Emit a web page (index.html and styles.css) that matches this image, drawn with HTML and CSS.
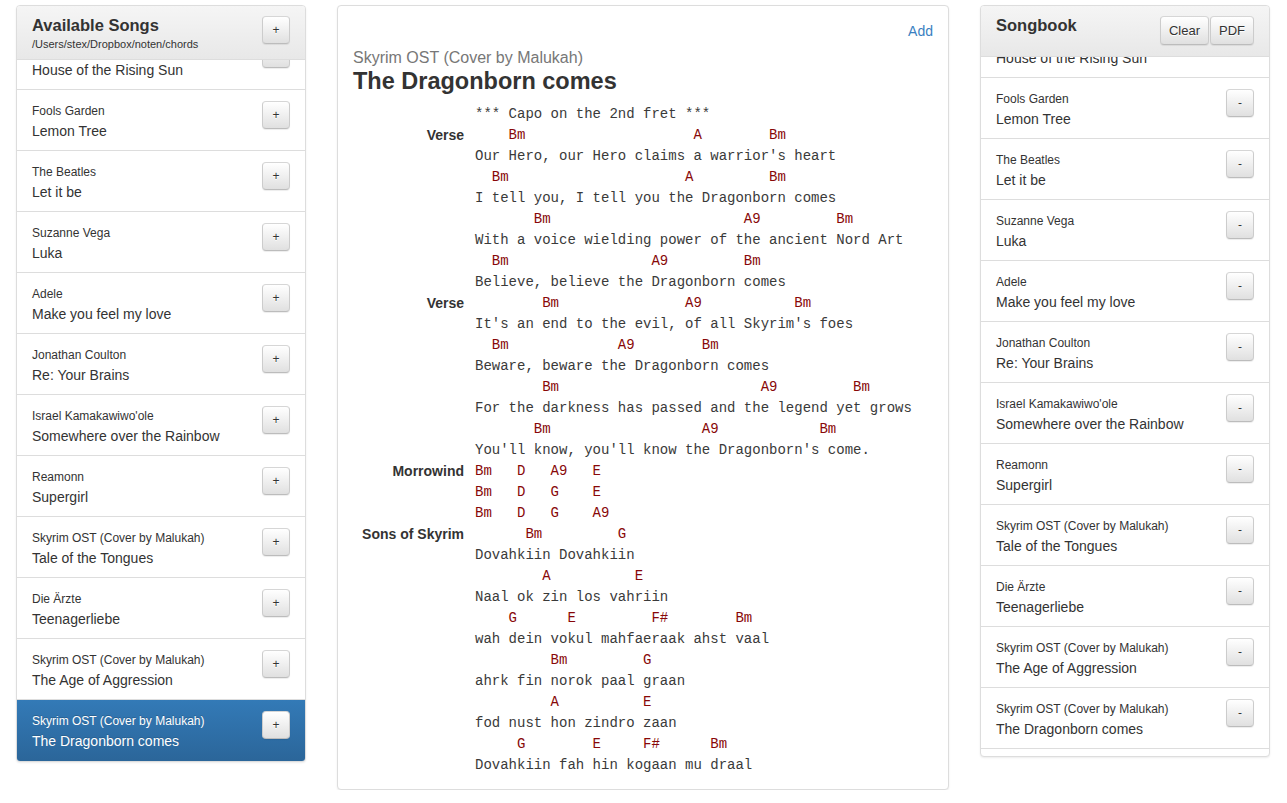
FILE: index.html
```html
<!DOCTYPE html>
<html>
<head>
<meta charset="utf-8">
<title>Songbook</title>
<link rel="stylesheet" href="styles.css">
</head>
<body>
<div class="app">
  <section class="panel side left">
    <header class="panel-head">
      <div class="head-text">
        <h2 class="panel-title">Available Songs</h2>
        <div class="path">/Users/stex/Dropbox/noten/chords</div>
      </div>
      <button class="btn btn-sq">+</button>
    </header>
    <div class="list-wrap left-wrap">
      <ul class="list left-list">
        <li class="item"><div><div class="artist">The Animals</div><div class="title">House of the Rising Sun</div></div><button class="btn btn-sq">+</button></li>
        <li class="item"><div><div class="artist">Fools Garden</div><div class="title">Lemon Tree</div></div><button class="btn btn-sq">+</button></li>
        <li class="item"><div><div class="artist">The Beatles</div><div class="title">Let it be</div></div><button class="btn btn-sq">+</button></li>
        <li class="item"><div><div class="artist">Suzanne Vega</div><div class="title">Luka</div></div><button class="btn btn-sq">+</button></li>
        <li class="item"><div><div class="artist">Adele</div><div class="title">Make you feel my love</div></div><button class="btn btn-sq">+</button></li>
        <li class="item"><div><div class="artist">Jonathan Coulton</div><div class="title">Re: Your Brains</div></div><button class="btn btn-sq">+</button></li>
        <li class="item"><div><div class="artist">Israel Kamakawiwo'ole</div><div class="title">Somewhere over the Rainbow</div></div><button class="btn btn-sq">+</button></li>
        <li class="item"><div><div class="artist">Reamonn</div><div class="title">Supergirl</div></div><button class="btn btn-sq">+</button></li>
        <li class="item"><div><div class="artist">Skyrim OST (Cover by Malukah)</div><div class="title">Tale of the Tongues</div></div><button class="btn btn-sq">+</button></li>
        <li class="item"><div><div class="artist">Die Ärzte</div><div class="title">Teenagerliebe</div></div><button class="btn btn-sq">+</button></li>
        <li class="item"><div><div class="artist">Skyrim OST (Cover by Malukah)</div><div class="title">The Age of Aggression</div></div><button class="btn btn-sq">+</button></li>
        <li class="item active"><div><div class="artist">Skyrim OST (Cover by Malukah)</div><div class="title">The Dragonborn comes</div></div><button class="btn btn-sq">+</button></li>
      </ul>
    </div>
  </section>

  <main class="panel song">
    <div class="song-actions"><a class="add-link" href="#">Add</a></div>
    <div class="song-artist">Skyrim OST (Cover by Malukah)</div>
    <h1 class="song-title">The Dragonborn comes</h1>
    <div class="sheet">
      <div class="line"><span class="label"></span><span class="lyric">*** Capo on the 2nd fret ***</span></div>
      <div class="line"><span class="label">Verse</span><span class="chord">    Bm                    A        Bm</span></div>
      <div class="line"><span class="label"></span><span class="lyric">Our Hero, our Hero claims a warrior's heart</span></div>
      <div class="line"><span class="label"></span><span class="chord">  Bm                     A         Bm</span></div>
      <div class="line"><span class="label"></span><span class="lyric">I tell you, I tell you the Dragonborn comes</span></div>
      <div class="line"><span class="label"></span><span class="chord">       Bm                       A9         Bm</span></div>
      <div class="line"><span class="label"></span><span class="lyric">With a voice wielding power of the ancient Nord Art</span></div>
      <div class="line"><span class="label"></span><span class="chord">  Bm                 A9         Bm</span></div>
      <div class="line"><span class="label"></span><span class="lyric">Believe, believe the Dragonborn comes</span></div>
      <div class="line"><span class="label">Verse</span><span class="chord">        Bm               A9           Bm</span></div>
      <div class="line"><span class="label"></span><span class="lyric">It's an end to the evil, of all Skyrim's foes</span></div>
      <div class="line"><span class="label"></span><span class="chord">  Bm             A9        Bm</span></div>
      <div class="line"><span class="label"></span><span class="lyric">Beware, beware the Dragonborn comes</span></div>
      <div class="line"><span class="label"></span><span class="chord">        Bm                        A9         Bm</span></div>
      <div class="line"><span class="label"></span><span class="lyric">For the darkness has passed and the legend yet grows</span></div>
      <div class="line"><span class="label"></span><span class="chord">       Bm                  A9            Bm</span></div>
      <div class="line"><span class="label"></span><span class="lyric">You'll know, you'll know the Dragonborn's come.</span></div>
      <div class="line"><span class="label">Morrowind</span><span class="chord">Bm   D   A9   E</span></div>
      <div class="line"><span class="label"></span><span class="chord">Bm   D   G    E</span></div>
      <div class="line"><span class="label"></span><span class="chord">Bm   D   G    A9</span></div>
      <div class="line"><span class="label">Sons of Skyrim</span><span class="chord">      Bm         G</span></div>
      <div class="line"><span class="label"></span><span class="lyric">Dovahkiin Dovahkiin</span></div>
      <div class="line"><span class="label"></span><span class="chord">        A          E</span></div>
      <div class="line"><span class="label"></span><span class="lyric">Naal ok zin los vahriin</span></div>
      <div class="line"><span class="label"></span><span class="chord">    G      E         F#        Bm</span></div>
      <div class="line"><span class="label"></span><span class="lyric">wah dein vokul mahfaeraak ahst vaal</span></div>
      <div class="line"><span class="label"></span><span class="chord">         Bm         G</span></div>
      <div class="line"><span class="label"></span><span class="lyric">ahrk fin norok paal graan</span></div>
      <div class="line"><span class="label"></span><span class="chord">         A          E</span></div>
      <div class="line"><span class="label"></span><span class="lyric">fod nust hon zindro zaan</span></div>
      <div class="line"><span class="label"></span><span class="chord">     G        E     F#      Bm</span></div>
      <div class="line"><span class="label"></span><span class="lyric">Dovahkiin fah hin kogaan mu draal</span></div>
    </div>
  </main>

  <section class="panel side right">
    <header class="panel-head">
      <h2 class="panel-title">Songbook</h2>
      <div class="btn-group">
        <button class="btn btn-text">Clear</button>
        <button class="btn btn-text">PDF</button>
      </div>
    </header>
    <div class="list-wrap right-wrap">
      <ul class="list right-list">
        <li class="item"><div><div class="artist">The Animals</div><div class="title">House of the Rising Sun</div></div><button class="btn btn-sq">-</button></li>
        <li class="item"><div><div class="artist">Fools Garden</div><div class="title">Lemon Tree</div></div><button class="btn btn-sq">-</button></li>
        <li class="item"><div><div class="artist">The Beatles</div><div class="title">Let it be</div></div><button class="btn btn-sq">-</button></li>
        <li class="item"><div><div class="artist">Suzanne Vega</div><div class="title">Luka</div></div><button class="btn btn-sq">-</button></li>
        <li class="item"><div><div class="artist">Adele</div><div class="title">Make you feel my love</div></div><button class="btn btn-sq">-</button></li>
        <li class="item"><div><div class="artist">Jonathan Coulton</div><div class="title">Re: Your Brains</div></div><button class="btn btn-sq">-</button></li>
        <li class="item"><div><div class="artist">Israel Kamakawiwo'ole</div><div class="title">Somewhere over the Rainbow</div></div><button class="btn btn-sq">-</button></li>
        <li class="item"><div><div class="artist">Reamonn</div><div class="title">Supergirl</div></div><button class="btn btn-sq">-</button></li>
        <li class="item"><div><div class="artist">Skyrim OST (Cover by Malukah)</div><div class="title">Tale of the Tongues</div></div><button class="btn btn-sq">-</button></li>
        <li class="item"><div><div class="artist">Die Ärzte</div><div class="title">Teenagerliebe</div></div><button class="btn btn-sq">-</button></li>
        <li class="item"><div><div class="artist">Skyrim OST (Cover by Malukah)</div><div class="title">The Age of Aggression</div></div><button class="btn btn-sq">-</button></li>
        <li class="item"><div><div class="artist">Skyrim OST (Cover by Malukah)</div><div class="title">The Dragonborn comes</div></div><button class="btn btn-sq">-</button></li>
      </ul>
    </div>
  </section>
</div>
</body>
</html>
```
FILE: styles.css
```css
* { box-sizing: border-box; }
html, body { margin: 0; padding: 0; background: #fff; }
body {
  font-family: "Liberation Sans", Arial, sans-serif;
  font-size: 14px;
  color: #333;
}
.app {
  display: flex;
  align-items: flex-start;
  gap: 31px;
  padding: 5px 17px 0 16px;
}
.panel {
  background: #fff;
  border: 1px solid #ddd;
  border-radius: 4px;
  box-shadow: 0 1px 2px rgba(0,0,0,0.08);
}
.side {
  width: 290px;
  flex: 0 0 290px;
  overflow: hidden;
}
.panel-head {
  display: flex;
  justify-content: space-between;
  align-items: flex-start;
  padding: 9px 15px 8px 15px;
  background: linear-gradient(to bottom, #f5f5f5 0%, #e8e8e8 100%);
  border-bottom: 1px solid #ddd;
}
.right .panel-head { padding-bottom: 11px; }
.panel-title {
  margin: 0;
  font-size: 16.5px;
  line-height: 20px;
  font-weight: bold;
  color: #333;
}
.path {
  margin-top: 2px;
  font-size: 11px;
  line-height: 14px;
  color: #333;
}
.btn {
  font-family: "Liberation Sans", Arial, sans-serif;
  color: #333;
  background: linear-gradient(to bottom, #ffffff 0%, #e0e0e0 100%);
  border: 1px solid #ccc;
  border-color: #d6d6d6 #ccc #bcbcbc;
  border-radius: 4px;
  text-shadow: 0 1px 0 #fff;
  box-shadow: inset 0 1px 0 rgba(255,255,255,0.15), 0 1px 1px rgba(0,0,0,0.075);
  padding: 0;
  cursor: pointer;
}
.btn-sq {
  width: 28px;
  height: 28px;
  font-size: 12px;
  line-height: 26px;
  margin-top: 1px;
  flex: 0 0 auto;
}
.btn-group {
  display: flex;
  gap: 1px;
  margin-top: 1px;
}
.btn-text {
  height: 29px;
  padding: 0 8px;
  font-size: 13px;
  line-height: 27px;
}
.list-wrap { overflow: hidden; }
.left-wrap { height: 701px; }
.right-wrap { height: 699px; }
.list {
  list-style: none;
  margin: 0;
  padding: 0;
}
.left-list { margin-top: -31px; }
.right-list { margin-top: -40px; }
.item {
  display: flex;
  justify-content: space-between;
  align-items: flex-start;
  height: 61px;
  padding: 10px 15px 0 15px;
  border-bottom: 1px solid #ddd;
}
.right .item { padding-top: 10px; }
.artist {
  margin-top: 2px;
  font-size: 12px;
  line-height: 18px;
}
.title {
  font-size: 14px;
  line-height: 22px;
}
.item.active {
  background: linear-gradient(to bottom, #337ab7 0%, #2b669a 100%);
  border-bottom-color: #2b669a;
  color: #fff;
  text-shadow: 0 -1px 0 #286090;
}
.item.active .artist, .item.active .title { color: #fff; }

.song {
  width: 612px;
  flex: 0 0 612px;
  height: 785px;
  padding: 15px 15px 13px 15px;
}
.song-actions {
  display: flex;
  justify-content: flex-end;
  line-height: 20px;
}
.add-link {
  color: #3a7fc1;
  text-decoration: none;
  font-size: 14px;
}
.song-artist {
  margin-top: 7px;
  font-size: 16px;
  line-height: 20px;
  color: #777;
}
.song-title {
  margin: 0;
  font-size: 23.5px;
  line-height: 26px;
  font-weight: bold;
  color: #333;
}
.sheet { margin-top: 10px; }
.line {
  display: grid;
  grid-template-columns: 111px 1fr;
  column-gap: 11px;
  height: 21px;
  line-height: 21px;
}
.label {
  text-align: right;
  font-weight: bold;
  font-size: 14px;
  color: #333;
}
.chord, .lyric {
  font-family: "Liberation Mono", "Courier New", monospace;
  font-size: 14px;
  white-space: pre;
}
.lyric { color: #3a3a3a; }
.chord { color: #880808; }
```
